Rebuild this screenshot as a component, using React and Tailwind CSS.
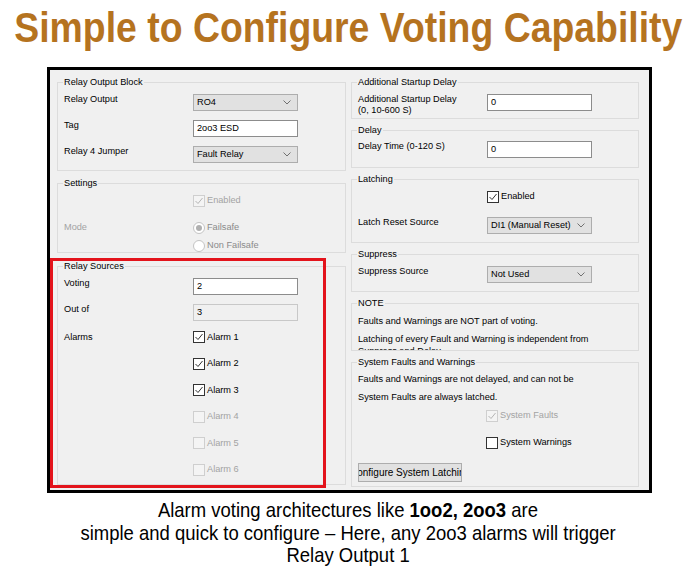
import React from "react";

// --- small win-forms style controls ---
const Check = ({ checked, disabled }) => (
  <span
    className={`size-[12px] shrink-0 border flex items-center justify-center ${
      disabled ? "border-[#cfcfcf] bg-[#f4f4f4]" : "border-[#333333] bg-white"
    }`}
  >
    {checked && (
      <svg width="10" height="10" viewBox="0 0 10 10">
        <path
          d="M1.5 5 L4 7.5 L8.5 2"
          fill="none"
          stroke={disabled ? "#b5b5b5" : "#333333"}
          strokeWidth="1"
        />
      </svg>
    )}
  </span>
);

const CheckRow = ({ label, checked, disabled }) => (
  <div className="h-[13px] flex items-center gap-[2px]">
    <Check checked={checked} disabled={disabled} />
    <span className={disabled ? "text-[#a3a3a3]" : "text-black"}>{label}</span>
  </div>
);

const Radio = ({ label, selected }) => (
  <div className="h-[13px] flex items-center gap-[2px]">
    <span className="size-[12px] shrink-0 rounded-full border border-[#c4c4c4] bg-white flex items-center justify-center">
      {selected && <span className="size-[6px] rounded-full bg-[#b0b0b0]" />}
    </span>
    <span className="text-[#8a8a8a]">{label}</span>
  </div>
);

const Select = ({ value }) => (
  <div className="w-[105px] h-[17px] shrink-0 bg-[#e1e1e1] border border-[#adadad] flex items-center justify-between pl-[3px] pr-[6px]">
    <span>{value}</span>
    <svg width="8" height="5" viewBox="0 0 8 5">
      <path d="M0.5 0.5 L4 4 L7.5 0.5" fill="none" stroke="#707070" strokeWidth="1" />
    </svg>
  </div>
);

const Input = ({ value, disabled }) => (
  <div
    className={`w-[105px] h-[17px] shrink-0 border flex items-center pl-[3px] ${
      disabled ? "bg-[#f0f0f0] border-[#c8c8c8]" : "bg-white border-[#8c8c8c]"
    }`}
  >
    {value}
  </div>
);

const Row = ({ label, children }) => (
  <div className="flex items-start">
    <div className="w-[130px] shrink-0 pl-[1px]">{label}</div>
    {children}
  </div>
);

const Group = ({ title, children, className = "" }) => (
  <fieldset className={`border border-[#dcdcdc] px-[5px] ${className}`}>
    <legend className="px-[1px] leading-[11px]">{title}</legend>
    {children}
  </fieldset>
);

// narrow headline look: Arial-metric face squeezed horizontally
const Narrow = ({ children, className = "" }) => (
  <div className="flex justify-center">
    <span className={`inline-block whitespace-nowrap origin-center ${className}`}>
      {children}
    </span>
  </div>
);

export default function App() {
  return (
    <div className="w-[696px] h-[573px] bg-white overflow-hidden font-['Liberation_Sans',Arial,sans-serif]">
      {/* Title */}
      <div className="h-[64px] pt-[4px] text-[42px] leading-[48px] font-bold text-[#b5731f]">
        <Narrow className="scale-x-[0.89]">Simple to Configure Voting Capability</Narrow>
      </div>

      {/* Dialog screenshot */}
      <div className="relative mt-[3px] ml-[47px] w-[605px] h-[426px] border-[3px] border-black bg-[#f0f0f0] flex gap-[5px] pl-[7px] pt-[7px] text-[9.2px] leading-[11px] text-black">
        {/* Left column */}
        <div className="w-[289px] flex flex-col">
          <Group title="Relay Output Block" className="pb-[7px]">
            <div className="pt-[6px] flex flex-col gap-[9px]">
              <Row label="Relay Output">
                <Select value="RO4" />
              </Row>
              <Row label="Tag">
                <Input value="2oo3 ESD" />
              </Row>
              <Row label="Relay 4 Jumper">
                <Select value="Fault Relay" />
              </Row>
            </div>
          </Group>

          <Group title="Settings" className="mt-[7px]">
            <div className="pt-[5px] flex flex-col">
              <Row label="">
                <CheckRow label="Enabled" checked disabled />
              </Row>
              <div className="mt-[14px] flex items-center">
                <div className="w-[130px] pl-[1px] text-[#a3a3a3]">Mode</div>
                <Radio label="Failsafe" selected />
              </div>
              <div className="mt-[5px] flex items-center">
                <div className="w-[130px]" />
                <Radio label="Non Failsafe" />
              </div>
            </div>
          </Group>

          <Group title="Relay Sources" className="mt-[8px] pb-[8px]">
            <div className="pt-[6px] flex flex-col gap-[9px]">
              <Row label="Voting">
                <Input value="2" />
              </Row>
              <Row label="Out of">
                <Input value="3" disabled />
              </Row>
              <div className="flex items-start pt-[0.5px]">
                <div className="w-[130px] pl-[1px] h-[13px] flex items-center">Alarms</div>
                <div className="flex flex-col gap-[13.5px]">
                  <CheckRow label="Alarm 1" checked />
                  <CheckRow label="Alarm 2" checked />
                  <CheckRow label="Alarm 3" checked />
                  <CheckRow label="Alarm 4" disabled />
                  <CheckRow label="Alarm 5" disabled />
                  <CheckRow label="Alarm 6" disabled />
                </div>
              </div>
            </div>
          </Group>
        </div>

        {/* Right column */}
        <div className="w-[288px] flex flex-col">
          <Group title="Additional Startup Delay" className="pb-[2px]">
            <div className="pt-[6px]">
              <Row
                label={
                  <>
                    Additional Startup Delay
                    <br />
                    (0, 10-600 S)
                  </>
                }
              >
                <Input value="0" />
              </Row>
            </div>
          </Group>

          <Group title="Delay" className="mt-[6px] pb-[9px]">
            <div className="pt-[5px]">
              <Row label="Delay Time (0-120 S)">
                <Input value="0" />
              </Row>
            </div>
          </Group>

          <Group title="Latching" className="mt-[6px] pb-[8px]">
            <div className="pt-[5px] flex flex-col gap-[14px]">
              <Row label="">
                <CheckRow label="Enabled" checked />
              </Row>
              <Row label="Latch Reset Source">
                <Select value="DI1 (Manual Reset)" />
              </Row>
            </div>
          </Group>

          <Group title="Suppress" className="mt-[6px] pb-[8px]">
            <div className="pt-[6px]">
              <Row label="Suppress Source">
                <Select value="Not Used" />
              </Row>
            </div>
          </Group>

          <Group title="NOTE" className="mt-[6px]">
            <div className="h-[41px] overflow-hidden pt-[7px] pl-[1px]">
              <div>Faults and Warnings are NOT part of voting.</div>
              <div className="mt-[6px] h-[17px] overflow-hidden leading-[12px]">
                Latching of every Fault and Warning is independent from
                <br />
                Suppress and Delay.
              </div>
            </div>
          </Group>

          <Group title="System Faults and Warnings" className="mt-[6px] pb-[4px]">
            <div className="pt-[6px] pl-[1px] flex flex-col">
              <div>Faults and Warnings are not delayed, and can not be</div>
              <div className="mt-[7px]">System Faults are always latched.</div>
              <div className="mt-[6px] pl-[128px]">
                <CheckRow label="System Faults" checked disabled />
              </div>
              <div className="mt-[14px] pl-[128px]">
                <CheckRow label="System Warnings" />
              </div>
              <button className="mt-[14px] w-[104px] h-[19px] text-[10px] bg-[#e1e1e1] border border-[#adadad] overflow-hidden whitespace-nowrap flex items-center justify-center">
                Configure System Latching
              </button>
            </div>
          </Group>
        </div>

        {/* red highlight annotation */}
        <div className="absolute left-0 top-[188px] w-[276px] h-[230px] border-[3px] border-[#e3131b] pointer-events-none" />
      </div>

      {/* Caption */}
      <div className="mt-[6px] text-[21px] leading-[22.5px] text-black">
        <Narrow className="scale-x-[0.88]">
          Alarm voting architectures like <b>1oo2, 2oo3</b> are
        </Narrow>
        <Narrow className="scale-x-[0.88]">
          simple and quick to configure – Here, any 2oo3 alarms will trigger
        </Narrow>
        <Narrow className="scale-x-[0.88]">Relay Output 1</Narrow>
      </div>
    </div>
  );
}
